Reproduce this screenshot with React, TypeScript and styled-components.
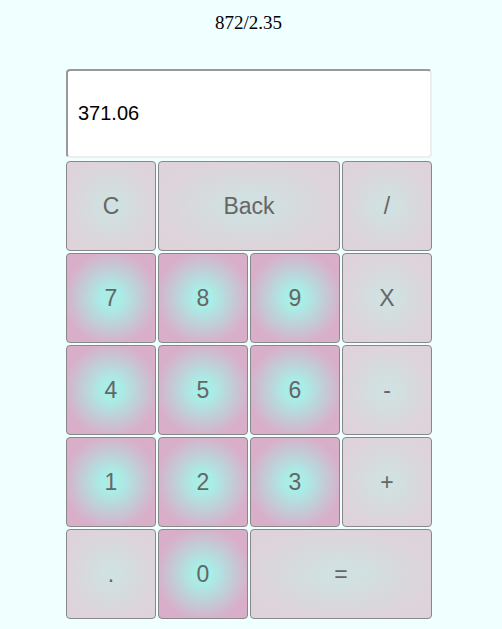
import React from "react";
import styled, { createGlobalStyle } from "styled-components";

const Global = createGlobalStyle`
  html, body { background: #f0ffff; }
  body { margin: 8px; font-family: "Liberation Serif", "Times New Roman", serif; }
`;

const Wrapper = styled.div`
  width: 370px;
  margin: 0 auto;
  display: flex;
  flex-direction: column;
`;

const Expression = styled.div`
  font-family: "Liberation Serif", "Times New Roman", serif;
  font-size: 19px;
  color: #000;
  text-align: center;
  padding-right: 5px;
  margin-top: 4px;
  height: 57px;
`;

const Display = styled.div`
  box-sizing: border-box;
  width: 366px;
  height: 89px;
  background: #fff;
  border-style: solid;
  border-width: 2px;
  border-color: #999 #eee #eee #999;
  border-radius: 4px;
  padding: 0 10px;
  display: flex;
  align-items: center;
  font-family: "Liberation Sans", Arial, sans-serif;
  font-size: 20px;
  color: #000;
  margin-bottom: 3px;
`;

const Keys = styled.div`
  display: grid;
  width: 366px;
  grid-template-columns: repeat(4, 90px);
  grid-auto-rows: 90px;
  gap: 2px;
`;

const Key = styled.button<{ $num?: boolean; $span?: number }>`
  box-sizing: border-box;
  grid-column: span ${(p) => p.$span ?? 1};
  border: 1px solid #888;
  border-radius: 4px;
  padding: 0;
  margin: 0;
  font-family: "Liberation Sans", Arial, sans-serif;
  font-size: 23px;
  color: #666;
  display: flex;
  align-items: center;
  justify-content: center;
  background: ${(p) =>
    p.$num
      ? "radial-gradient(#a9ede6 16%, #d9aec9 76%)"
      : "radial-gradient(#d1e0e0 16%, #ded3da 76%)"};
`;

const keys: { label: string; num?: boolean; span?: number }[] = [
  { label: "C" },
  { label: "Back", span: 2 },
  { label: "/" },
  { label: "7", num: true },
  { label: "8", num: true },
  { label: "9", num: true },
  { label: "X" },
  { label: "4", num: true },
  { label: "5", num: true },
  { label: "6", num: true },
  { label: "-" },
  { label: "1", num: true },
  { label: "2", num: true },
  { label: "3", num: true },
  { label: "+" },
  { label: "." },
  { label: "0", num: true },
  { label: "=", span: 2 },
];

export default function App() {
  return (
    <>
      <Global />
      <Wrapper>
        <Expression>872/2.35</Expression>
        <Display>371.06</Display>
        <Keys>
          {keys.map((k, i) => (
            <Key key={i} $num={k.num} $span={k.span}>
              {k.label}
            </Key>
          ))}
        </Keys>
      </Wrapper>
    </>
  );
}
